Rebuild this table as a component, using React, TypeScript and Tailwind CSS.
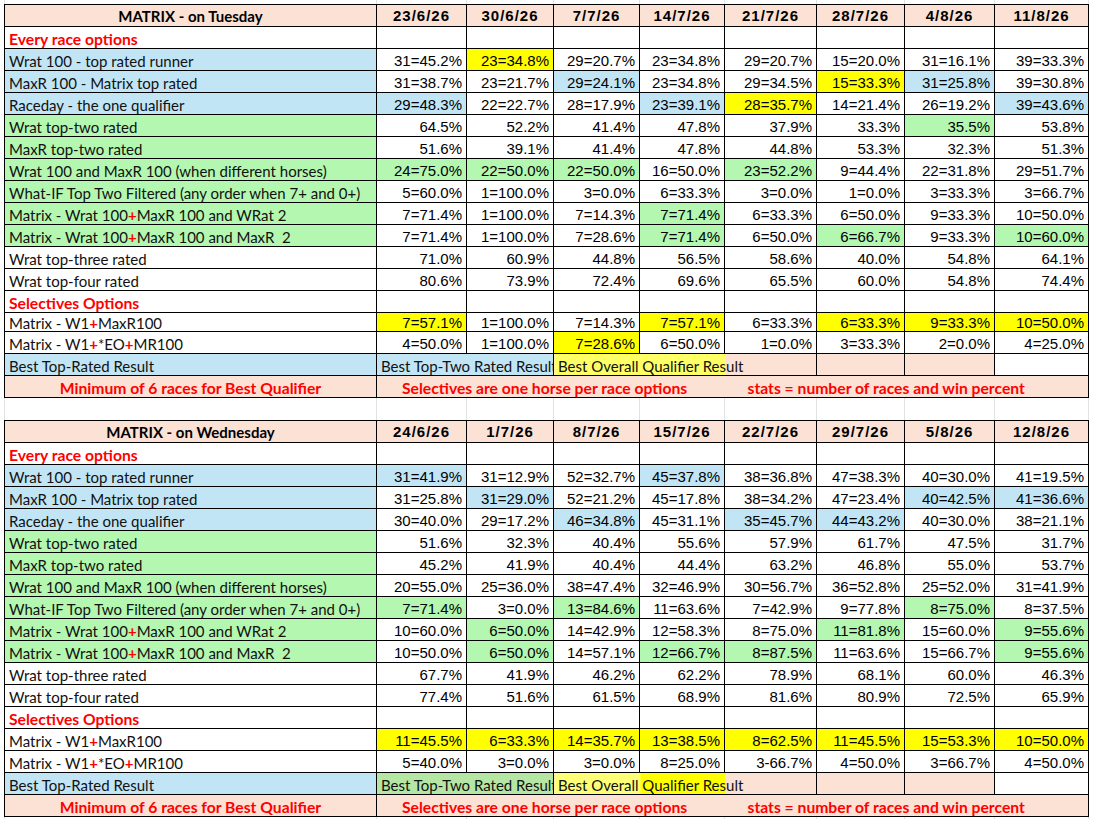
import React from "react";

type RowDef = {
  kind?: "sec";
  label: string;
  bg?: "B" | "G";
  plus?: boolean;
  cells?: string[];
  h?: string;
};

const BG: Record<string, string> = {
  B: "bg-[#c1e5f5]",
  G: "bg-[#b4f7b0]",
  Y: "bg-[#ffff00]",
  W: "bg-white",
};
const LF = "[font-family:Lato,'Noto_Sans',sans-serif]";
const NF = "[font-family:'Liberation_Sans',Arial,sans-serif]";
const PEACH = "bg-[#fbe2d5]";
const WIDTHS = ["w-[372px]", "w-[90px]", "w-[87px]", "w-[86px]", "w-[85px]", "w-[92px]", "w-[88px]", "w-[90px]", "w-[94px]"];

const T1: RowDef[] = [
  { kind: "sec", label: "Every race options" },
  { label: "Wrat 100 - top rated runner", bg: "B", cells: ["31=45.2%", "Y:23=34.8%", "29=20.7%", "23=34.8%", "29=20.7%", "15=20.0%", "31=16.1%", "39=33.3%"] },
  { label: "MaxR 100 - Matrix top rated", bg: "B", cells: ["31=38.7%", "23=21.7%", "B:29=24.1%", "23=34.8%", "29=34.5%", "Y:15=33.3%", "B:31=25.8%", "39=30.8%"] },
  { label: "Raceday - the one qualifier", bg: "B", cells: ["B:29=48.3%", "22=22.7%", "28=17.9%", "B:23=39.1%", "Y:28=35.7%", "14=21.4%", "26=19.2%", "B:39=43.6%"] },
  { label: "Wrat top-two rated", bg: "G", cells: ["64.5%", "52.2%", "41.4%", "47.8%", "37.9%", "33.3%", "G:35.5%", "53.8%"] },
  { label: "MaxR top-two rated", bg: "G", cells: ["51.6%", "39.1%", "41.4%", "47.8%", "44.8%", "53.3%", "32.3%", "51.3%"] },
  { label: "Wrat 100 and MaxR 100 (when different horses)", bg: "G", cells: ["G:24=75.0%", "G:22=50.0%", "G:22=50.0%", "16=50.0%", "G:23=52.2%", "9=44.4%", "22=31.8%", "29=51.7%"] },
  { label: "What-IF Top Two Filtered (any order when 7+ and 0+)", bg: "G", cells: ["5=60.0%", "1=100.0%", "3=0.0%", "6=33.3%", "3=0.0%", "1=0.0%", "3=33.3%", "3=66.7%"] },
  { label: "Matrix - Wrat 100+MaxR 100 and WRat 2", bg: "G", plus: true, cells: ["7=71.4%", "1=100.0%", "7=14.3%", "G:7=71.4%", "6=33.3%", "6=50.0%", "9=33.3%", "10=50.0%"] },
  { label: "Matrix - Wrat 100+MaxR 100 and MaxR  2", bg: "G", plus: true, cells: ["7=71.4%", "1=100.0%", "7=28.6%", "G:7=71.4%", "6=50.0%", "G:6=66.7%", "9=33.3%", "G:10=60.0%"] },
  { label: "Wrat top-three rated", cells: ["71.0%", "60.9%", "44.8%", "56.5%", "58.6%", "40.0%", "54.8%", "64.1%"] },
  { label: "Wrat top-four rated", cells: ["80.6%", "73.9%", "72.4%", "69.6%", "65.5%", "60.0%", "54.8%", "74.4%"] },
  { kind: "sec", label: "Selectives Options" },
  { label: "Matrix - W1+MaxR100", plus: true, h: "h-[19px]", cells: ["Y:7=57.1%", "1=100.0%", "7=14.3%", "Y:7=57.1%", "6=33.3%", "Y:6=33.3%", "Y:9=33.3%", "Y:10=50.0%"] },
  { label: "Matrix - W1+*EO+MR100", plus: true, cells: ["4=50.0%", "1=100.0%", "Y:7=28.6%", "6=50.0%", "1=0.0%", "3=33.3%", "2=0.0%", "4=25.0%"] },
];

const T2: RowDef[] = [
  { kind: "sec", label: "Every race options" },
  { label: "Wrat 100 - top rated runner", bg: "B", cells: ["B:31=41.9%", "31=12.9%", "52=32.7%", "B:45=37.8%", "38=36.8%", "47=38.3%", "40=30.0%", "41=19.5%"] },
  { label: "MaxR 100 - Matrix top rated", bg: "B", cells: ["31=25.8%", "B:31=29.0%", "52=21.2%", "45=17.8%", "38=34.2%", "47=23.4%", "B:40=42.5%", "B:41=36.6%"] },
  { label: "Raceday - the one qualifier", bg: "B", cells: ["30=40.0%", "29=17.2%", "B:46=34.8%", "45=31.1%", "B:35=45.7%", "B:44=43.2%", "40=30.0%", "38=21.1%"] },
  { label: "Wrat top-two rated", bg: "G", cells: ["51.6%", "32.3%", "40.4%", "55.6%", "57.9%", "61.7%", "47.5%", "31.7%"] },
  { label: "MaxR top-two rated", bg: "G", cells: ["45.2%", "41.9%", "40.4%", "44.4%", "63.2%", "46.8%", "55.0%", "53.7%"] },
  { label: "Wrat 100 and MaxR 100 (when different horses)", bg: "G", cells: ["20=55.0%", "25=36.0%", "38=47.4%", "32=46.9%", "30=56.7%", "36=52.8%", "25=52.0%", "31=41.9%"] },
  { label: "What-IF Top Two Filtered (any order when 7+ and 0+)", bg: "G", cells: ["G:7=71.4%", "3=0.0%", "G:13=84.6%", "11=63.6%", "7=42.9%", "9=77.8%", "G:8=75.0%", "8=37.5%"] },
  { label: "Matrix - Wrat 100+MaxR 100 and WRat 2", bg: "G", plus: true, cells: ["10=60.0%", "G:6=50.0%", "14=42.9%", "12=58.3%", "8=75.0%", "G:11=81.8%", "15=60.0%", "G:9=55.6%"] },
  { label: "Matrix - Wrat 100+MaxR 100 and MaxR  2", bg: "G", plus: true, cells: ["10=50.0%", "G:6=50.0%", "14=57.1%", "G:12=66.7%", "G:8=87.5%", "11=63.6%", "15=66.7%", "G:9=55.6%"] },
  { label: "Wrat top-three rated", cells: ["67.7%", "41.9%", "46.2%", "62.2%", "78.9%", "68.1%", "60.0%", "46.3%"] },
  { label: "Wrat top-four rated", cells: ["77.4%", "51.6%", "61.5%", "68.9%", "81.6%", "80.9%", "72.5%", "65.9%"] },
  { kind: "sec", label: "Selectives Options" },
  { label: "Matrix - W1+MaxR100", plus: true, cells: ["Y:11=45.5%", "Y:6=33.3%", "Y:14=35.7%", "Y:13=38.5%", "Y:8=62.5%", "Y:11=45.5%", "Y:15=53.3%", "Y:10=50.0%"] },
  { label: "Matrix - W1+*EO+MR100", plus: true, cells: ["5=40.0%", "3=0.0%", "3=0.0%", "8=25.0%", "3-66.7%", "4=50.0%", "3=66.7%", "4=50.0%"] },
];

function Label({ text, plus }: { text: string; plus?: boolean }) {
  if (!plus) return <>{text}</>;
  const parts = text.split("+");
  return (
    <>
      {parts.map((p, i) => (
        <React.Fragment key={i}>
          {i > 0 && <span className="text-[#ff0000] font-bold">+</span>}
          {p}
        </React.Fragment>
      ))}
    </>
  );
}

function parseCell(s: string): [string, string] {
  const m = s.match(/^([YBG]):(.*)$/);
  if (m) return [BG[m[1]], m[2]];
  return [BG.W, s];
}

function GridLines({ h }: { h: string }) {
  return (
    <div className={`flex ${h} ml-[4px] border-l border-[#e2e2e2]`}>
      {WIDTHS.map((w, i) => (
        <div key={i} className={`${w} shrink-0 border-r border-[#e2e2e2]`} />
      ))}
    </div>
  );
}

const TD = "border border-black p-0 overflow-hidden whitespace-nowrap leading-[16px] align-middle";

function Sheet({
  title,
  dates,
  rows,
  midBg,
  qualBg,
}: {
  title: string;
  dates: string[];
  rows: RowDef[];
  midBg: string;
  qualBg: string;
}) {
  return (
    <table className="ml-[4px] w-[1085px] table-fixed border-collapse text-black">
      <colgroup>
        {WIDTHS.map((w, i) => (
          <col key={i} className={w} />
        ))}
      </colgroup>
      <tbody>
        <tr className="h-[22px]">
          <td className={`${TD} ${PEACH} text-center pt-[1px] font-bold text-[15px] ${LF}`}>{title}</td>
          {dates.map((d) => (
            <td key={d} className={`${TD} ${PEACH} text-center pt-[1px] font-bold text-[15px] tracking-[1px] ${NF}`}>
              {d}
            </td>
          ))}
        </tr>
        {rows.map((r, ri) => (
          <tr key={ri} className={r.h ?? "h-[22px]"}>
            <td
              className={`${TD} ${r.bg ? BG[r.bg] : "bg-white"} pl-[4px] pt-[2px] whitespace-pre ${LF} ${
                r.kind === "sec" ? "text-[#ff0000] font-bold text-[15.7px]" : "text-[#111] text-[15px]"
              }`}
            >
              <Label text={r.label} plus={r.plus} />
            </td>
            {(r.cells ?? Array(8).fill("")).map((c, ci) => {
              const [bg, t] = parseCell(c);
              return (
                <td key={ci} className={`${TD} ${bg} text-right pr-[4px] pt-[2px] text-[15px] ${NF}`}>
                  {t}
                </td>
              );
            })}
          </tr>
        ))}
        <tr className={`h-[22px] text-[15px] ${LF} text-[#111]`}>
          <td className={`${TD} bg-[#c1e5f5] pl-[4px] pt-[2px]`}>Best Top-Rated Result</td>
          <td colSpan={2} className={`${TD} ${midBg} pl-[4px] pt-[2px]`}>
            Best Top-Two Rated Result
          </td>
          <td colSpan={3} className={`${TD} ${qualBg} pl-[4px] pt-[2px]`}>
            Best Overall Qualifier Result
          </td>
          <td className={`${TD} ${PEACH}`} />
          <td className={`${TD} ${PEACH}`} />
          <td className={`${TD} bg-white`} />
        </tr>
        <tr className={`h-[22px] text-[15.7px] font-bold text-[#ff0000] ${LF} ${PEACH}`}>
          <td className={`${TD} text-center pt-[2px]`}>Minimum of 6 races for Best Qualifier</td>
          <td colSpan={4} className={`${TD} border-r-0 pl-[25px] pt-[2px]`}>
            Selectives are one horse per race options
          </td>
          <td colSpan={4} className={`${TD} border-l-0 pl-[23px] pt-[2px]`}>
            stats = number of races and win percent
          </td>
        </tr>
      </tbody>
    </table>
  );
}

export default function App() {
  return (
    <div className="w-[1095px] h-[819px] bg-white overflow-hidden">
      <GridLines h="h-[4px]" />
      <Sheet
        title="MATRIX - on Tuesday"
        dates={["23/6/26", "30/6/26", "7/7/26", "14/7/26", "21/7/26", "28/7/26", "4/8/26", "11/8/26"]}
        rows={T1}
        midBg="bg-[#c1e5f5]"
        qualBg="bg-[linear-gradient(to_right,#ffff66_0px,#ffff66_171px,#fbe2d5_171px)]"
      />
      <GridLines h="h-[22px]" />
      <Sheet
        title="MATRIX - on Wednesday"
        dates={["24/6/26", "1/7/26", "8/7/26", "15/7/26", "22/7/26", "29/7/26", "5/8/26", "12/8/26"]}
        rows={T2}
        midBg="bg-[#b5e6a3]"
        qualBg="bg-[linear-gradient(to_right,#ffff77_0px,#ffff77_86px,#ffff00_86px,#ffff00_171px,#fbe2d5_171px)]"
      />
      <GridLines h="h-[22px]" />
    </div>
  );
}
